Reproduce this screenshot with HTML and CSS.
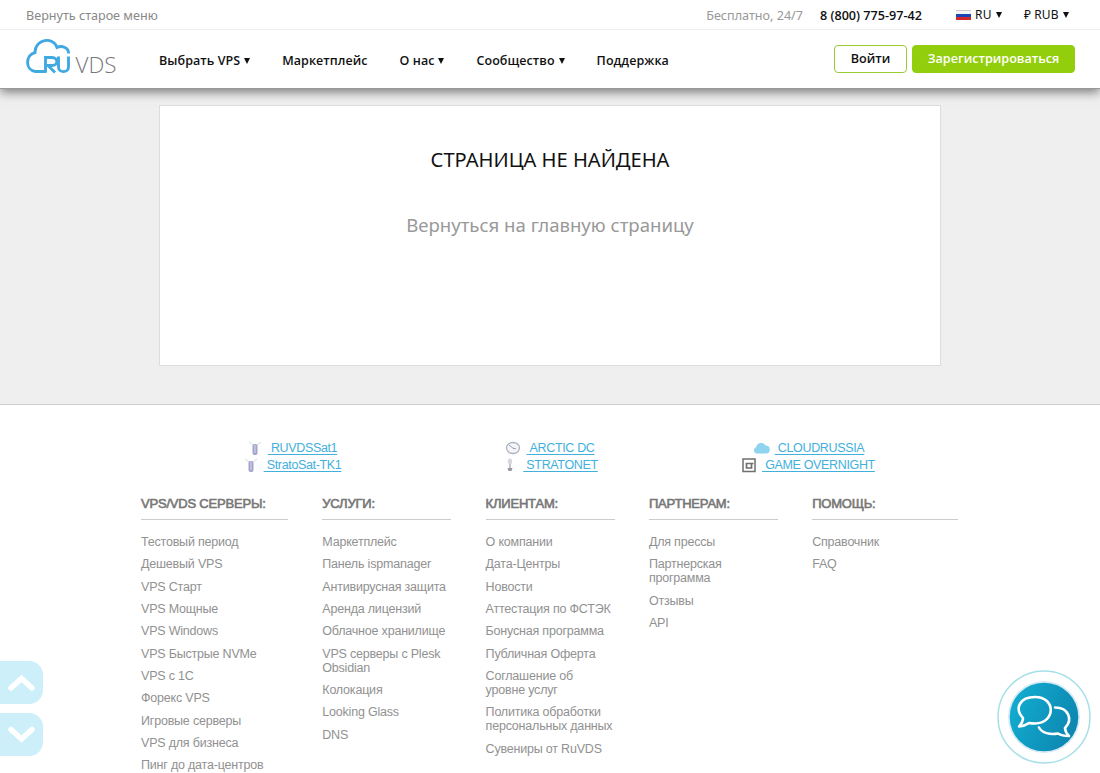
FILE: index.html
```html
<!DOCTYPE html>
<html lang="ru">
<head>
<meta charset="utf-8">
<title>RUVDS</title>
<link rel="stylesheet" href="styles.css">
</head>
<body>
<header class="header">
  <div class="topbar">
    <a class="old-menu">Вернуть старое меню</a>
    <span class="free">Бесплатно, 24/7</span>
    <b class="phone">8 (800) 775-97-42</b>
    <span class="lang"><i class="flag"></i>RU<i class="caret"></i></span>
    <span class="currency"><span class="ruble">₽</span> RUB<i class="caret"></i></span>
  </div>
  <div class="mainbar">
    <a class="logo">
      <svg width="96" height="44" viewBox="0 0 96 44">
        <path d="M19.500 33.500H9.500C-1 32.500 -1 17 9 14.500C9 1 27-2 31 9.500C36 7 43 10 42.500 15.500" fill="none" stroke="#41a9e1" stroke-width="2.900"/>
        <path d="M19.500 34.800V19.500H26C32.500 19.500 32.500 27.500 26 27.500H22L29 34.500M32.500 18.500V29C32.500 35.200 42.500 35.200 42.500 29V18.500" fill="none" stroke="#41a9e1" stroke-width="2.900"/>
        <text x="49.500" y="34.500" class="logo-vds" textLength="41" lengthAdjust="spacingAndGlyphs">VDS</text>
      </svg>
    </a>
    <nav class="nav">
      <a>Выбрать VPS<i class="caret"></i></a>
      <a>Маркетплейс</a>
      <a>О нас<i class="caret"></i></a>
      <a>Сообщество<i class="caret"></i></a>
      <a>Поддержка</a>
    </nav>
    <a class="button login">Войти</a>
    <a class="button register">Зарегистрироваться</a>
  </div>
</header>
<main class="main">
  <section class="card">
    <h1>СТРАНИЦА НЕ НАЙДЕНА</h1>
    <a class="home-link">Вернуться на главную страницу</a>
  </section>
</main>
<footer class="footer">
  <div class="projects">
    <div class="project-group">
      <div class="project"><svg width="16" height="16" viewBox="0 0 16 16"><path d="M2 2l4 3M14 2l-4 3" stroke="#d5d8df"/><rect x="5.500" y="4" width="5" height="11" rx="2" fill="#a3a4cb"/><path d="M8 5v8" stroke="#d9daf0"/></svg><a>&nbsp;RUVDSSat1</a></div>
      <div class="project"><svg width="16" height="16" viewBox="0 0 16 16"><path d="M2 2l4 3M14 2l-4 3" stroke="#d5d8df"/><rect x="5.500" y="4" width="5" height="11" rx="2" fill="#a3a4cb"/><path d="M8 5v8" stroke="#d9daf0"/></svg><a>&nbsp;StratoSat-TK1</a></div>
    </div>
    <div class="project-group">
      <div class="project"><svg width="16" height="16" viewBox="0 0 16 16"><ellipse cx="8" cy="8" rx="6.500" ry="5.500" fill="#f5f6fa" stroke="#aeb2c3" stroke-width="1.300"/><path d="M4 5l5 4M8 8l3 1" stroke="#9da2b4"/></svg><a>&nbsp;ARCTIC DC</a></div>
      <div class="project"><svg width="16" height="16" viewBox="0 0 16 16"><ellipse cx="8" cy="4.500" rx="2.200" ry="3" fill="#d5d8dd"/><path d="M8 7v4" stroke="#c5c7cb" stroke-width="2"/><path d="M5.500 11h5l-1 3h-3z" fill="#9699a2"/></svg><a>&nbsp;STRATONET</a></div>
    </div>
    <div class="project-group">
      <div class="project"><svg width="18" height="16" viewBox="0 0 18 16"><path d="M4 13.500a3.500 3.500 0 0 1 .2-6.500A5 5 0 0 1 13.500 5.500A4 4 0 0 1 14 13.500z" fill="#8fd3ee"/></svg><a>&nbsp;CLOUDRUSSIA</a></div>
      <div class="project"><svg width="16" height="16" viewBox="0 0 16 16"><rect x="2" y="2" width="12" height="12.500" fill="none" stroke="#6f6f6f" stroke-width="1.500"/><path d="M12.500 6.500H5.500v4.500h5V6.500" fill="none" stroke="#6f6f6f" stroke-width="1.700"/></svg><a>&nbsp;GAME OVERNIGHT</a></div>
    </div>
  </div>
  <div class="columns">
    <section><h2>VPS/VDS СЕРВЕРЫ:</h2><ul><li>Тестовый период</li><li>Дешевый VPS</li><li>VPS Старт</li><li>VPS Мощные</li><li>VPS Windows</li><li>VPS Быстрые NVMe</li><li>VPS с 1С</li><li>Форекс VPS</li><li>Игровые серверы</li><li>VPS для бизнеса</li><li>Пинг до дата-центров</li></ul></section>
    <section><h2>УСЛУГИ:</h2><ul><li>Маркетплейс</li><li>Панель ispmanager</li><li>Антивирусная защита</li><li>Аренда лицензий</li><li>Облачное хранилище</li><li>VPS серверы с Plesk<br>Obsidian</li><li>Колокация</li><li>Looking Glass</li><li>DNS</li></ul></section>
    <section><h2>КЛИЕНТАМ:</h2><ul><li>О компании</li><li>Дата-Центры</li><li>Новости</li><li>Аттестация по ФСТЭК</li><li>Бонусная программа</li><li>Публичная Оферта</li><li>Соглашение об<br>уровне услуг</li><li>Политика обработки<br>персональных данных</li><li>Сувениры от RuVDS</li></ul></section>
    <section><h2>ПАРТНЕРАМ:</h2><ul><li>Для прессы</li><li>Партнерская<br>программа</li><li>Отзывы</li><li>API</li></ul></section>
    <section><h2>ПОМОЩЬ:</h2><ul><li>Справочник</li><li>FAQ</li></ul></section>
  </div>
</footer>
<div class="scroll-buttons">
  <a><svg width="43" height="43" viewBox="0 0 43 43"><path d="M11 27l10.500-9.500L32 27" /></svg></a>
  <a><svg width="43" height="43" viewBox="0 0 43 43"><path d="M11 16.500l10.500 9.500L32 16.500" /></svg></a>
</div>
<a class="chat">
  <svg width="96" height="96" viewBox="0 0 96 96">
    <defs><linearGradient id="chat-fill" x1="0" y1="0.300" x2="1" y2="0.700"><stop offset="0" stop-color="#13acd0"/><stop offset="1" stop-color="#0c85af"/></linearGradient></defs>
    <circle cx="48" cy="48" r="46" fill="#fff" stroke="#a5e0e8" stroke-width="1.500"/>
    <circle cx="48" cy="48" r="36" fill="#d4eaf5"/>
    <circle cx="48" cy="48" r="34.300" fill="url(#chat-fill)"/>
    <path d="M27 49C18 39 24 28 39 28C60 28 60 54 39 54.500Q35 54.500 33 54Q29 57 23 57.500Q27 53 27 49Z"/>
    <path d="M59 38.500C73 38.500 77 51 69 59Q69 63 73 67Q66 67 62 64.500C54 66 46 64 43 58.500"/>
  </svg>
</a>
</body>
</html>
```
FILE: styles.css
```css
* { box-sizing: border-box; }
body {
  margin: 0;
  height: 773px;
  overflow: hidden;
  background: #fff;
  font-family: "Noto Sans", "Open Sans", sans-serif;
  color: #111;
}
svg { display: block; flex: none; }
.header {
  position: relative;
  height: 89px;
  background: #fff;
  border-bottom: 1px solid #999;
  box-shadow: 0 3px 10px rgba(0, 0, 0, .5);
}
.topbar {
  display: flex;
  align-items: center;
  height: 30px;
  padding: 0 28px 0 26px;
  border-bottom: 1px solid #eee;
  font-size: 12.600px;
  white-space: nowrap;
}
.old-menu { color: #888; margin-right: auto; padding-top: 1px; }
.free { color: #999; margin-right: 17px; padding-top: 1px; }
.phone {
  width: 102px;
  margin-right: 34px;
  padding-top: 1px;
  font-family: "Open Sans", sans-serif;
  font-size: 12.600px;
  font-weight: 600;
}
.lang, .currency { display: flex; align-items: center; font-size: 12px; letter-spacing: .2px; }
.lang { width: 68px; }
.currency { width: 48px; }
.ruble { margin-right: 3px; }
.flag {
  width: 15px;
  height: 10px;
  margin-right: 4px;
  border: 1px solid #ccc;
  border-width: 1px 0 0;
  background: linear-gradient(#f4f4f4 30%, #1948b5 30% 65%, #d32730 65%);
}
.caret {
  display: inline-block;
  border: solid transparent;
  border-width: 6px 3.500px 0;
  border-top-color: #111;
  margin-left: 4px;
}
.nav .caret { vertical-align: 1px; }
.mainbar { display: flex; height: 58px; padding: 0 25px 0 26px; }
.logo { width: 133px; padding-top: 8px; }
.logo-vds { font: 300 22px "Open Sans", sans-serif; fill: #777; }
.nav {
  display: flex;
  gap: 32px;
  margin-right: auto;
  padding-top: 22px;
  font-family: "Open Sans", sans-serif;
  font-size: 12.500px;
  font-weight: 600;
  line-height: 18px;
  letter-spacing: .06px;
  white-space: nowrap;
}
.button {
  height: 28px;
  margin-top: 15px;
  border: 1px solid #9c3;
  border-radius: 4px;
  font-family: "Open Sans", sans-serif;
  font-size: 12.600px;
  font-weight: 600;
  line-height: 26px;
  text-align: center;
}
.login { width: 73px; margin-right: 5px; }
.register { width: 163px; background: #93ce0c; border-color: #93ce0c; color: #fff; }
.main {
  height: 316px;
  padding-top: 16px;
  background: #efefef;
  border-bottom: 1px solid #ccc;
}
.card {
  width: 782px;
  height: 261px;
  margin: 0 auto;
  padding-top: 40px;
  background: #fff;
  border: 1px solid #ddd;
  text-align: center;
}
h1 { margin: 0 0 37px; font-size: 20.100px; line-height: 28px; font-weight: 400; }
.home-link { color: #999; font-size: 18.600px; line-height: 28px; }
.footer {
  padding-top: 34px;
  font-family: "Liberation Sans", Arial, sans-serif;
  color: #919191;
}
.projects { display: grid; grid-template-columns: 258px 258px 258px; justify-content: center; }
.project { display: flex; justify-content: center; height: 17px; align-items: center; gap: 5px; }
.project a {
  color: #42b0dd;
  font-size: 12.500px;
  letter-spacing: -.35px;
  text-decoration: underline;
  text-underline-offset: 2px;
}
.columns {
  display: grid;
  grid-template-columns: 147px 129px 129px 129px 146px;
  column-gap: 34.300px;
  padding: 22px 0 0 141px;
}
h2 {
  height: 25px;
  margin: 0 0 15px;
  border-bottom: 1px solid #ccc;
  font-size: 13px;
  font-weight: 400;
  line-height: 18px;
  letter-spacing: -.2px;
  white-space: nowrap;
  color: #777;
  -webkit-text-stroke: .6px #777;
}
ul { list-style: none; margin: 0; padding: 0; }
li { margin-bottom: 8.350px; font-size: 12.500px; line-height: 14px; letter-spacing: -.2px; white-space: nowrap; }
.scroll-buttons { position: absolute; left: 0; top: 661px; }
.scroll-buttons a {
  display: block;
  width: 43px;
  height: 43px;
  margin-bottom: 9px;
  border-radius: 0 14px 14px 0;
  background: #cceffa;
}
.scroll-buttons path { fill: none; stroke: #fff; stroke-width: 5.500; stroke-linecap: round; }
.chat { position: absolute; left: 996px; top: 669px; }
.chat path { fill: none; stroke: #fff; stroke-width: 2.600; stroke-linecap: round; stroke-linejoin: round; }
```
